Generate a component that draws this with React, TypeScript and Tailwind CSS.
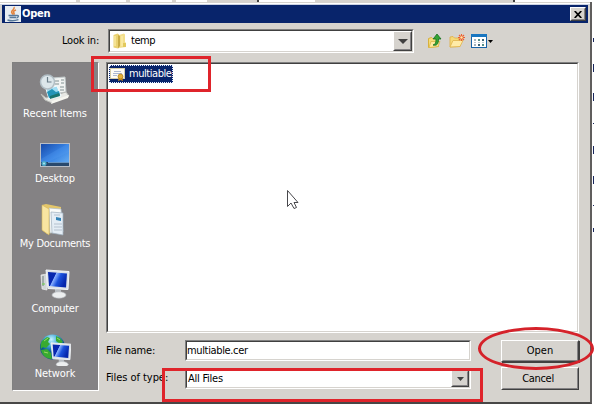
import { useState } from 'react';
import type { ReactNode } from 'react';

const sunken = 'border border-t-[#808080] border-l-[#808080] border-r-white border-b-white';
const sunkenInner = 'border border-t-[#404040] border-l-[#404040] border-r-[#d6d3ce] border-b-[#d6d3ce]';
const raised = 'border border-t-white border-l-white border-r-[#404040] border-b-[#404040]';
const raisedInner = 'border border-t-[#d6d3ce] border-l-[#d6d3ce] border-r-[#848284] border-b-[#848284]';

function JavaIcon() {
  return (
    <svg className="w-4 h-4 shrink-0" viewBox="0 0 16 16" fill="none">
      <rect width="16" height="16" fill="#e8edf2" />
      <path d="M9 1c1.500 2.500-4 3.500-2 6l1 1.500M11 4C8.500 5 8 5.500 9 7c.4.6.3 1.200-.4 1.800" stroke="#e4833c" strokeWidth="1.500" />
      <path d="M3.500 9.500h8M4.500 11.500h6.500M11.500 9.500c3-.5 2 2 0 2.500M2.500 14c3 1 8 .8 11-.3" stroke="#58799a" strokeWidth="1.400" />
    </svg>
  );
}

function FolderIcon() {
  return (
    <svg className="w-4 h-4 shrink-0" viewBox="0 0 16 16">
      <path d="M1.500 2l4-1.500 1.500 1v13l-1 1-4.500-1z" fill="#ead273" />
      <path d="M7 2l5-1.500 1 1V9l1 1v4l-7 1z" fill="#f3df8c" />
      <path d="M6 2l2 1v10l-2 2.500z" fill="#c9ab45" />
      <path d="M3 3v10M10 3v10" stroke="#fff3b5" />
      <path d="M11 10h3v4h-3z" fill="#e2c95d" />
    </svg>
  );
}

function UpFolderIcon() {
  return (
    <svg className="w-4 h-4" viewBox="0 0 16 16">
      <path d="M1.500 14.500V5.500l3-1 1 1h5l1 8z" fill="#f5dc78" stroke="#d8b13d" />
      <path d="M2 14.500l2-6h9l-2 5z" fill="#ffeaa0" stroke="#dcb748" strokeWidth=".8" />
      <path d="M6 12c2.500-.5 3-2.500 3-6H6.200L10 1l4 5h-2.500c0 5-1.500 7-5.500 6z" fill="#35a435" stroke="#14701c" strokeWidth=".8" />
    </svg>
  );
}

function NewFolderIcon() {
  return (
    <svg className="w-4 h-4" viewBox="0 0 16 16">
      <path d="M1 14V4l3-.5L5.500 5H10l1 8.500z" fill="#f5d979" stroke="#dfae43" strokeWidth=".8" />
      <path d="M1 14l3-6.500h10L11 13.500z" fill="#ffeba7" stroke="#e0b44c" strokeWidth=".8" />
      <path d="M12.500 1v7M9 4.500h7M10 2l5 5M15 2l-5 5" stroke="#ed6030" strokeWidth="1.100" />
      <circle cx="12.500" cy="4.500" r="1.200" fill="#ffe9aa" />
    </svg>
  );
}

function ViewIcon() {
  return (
    <svg className="w-[23px] h-4" viewBox="0 0 23 16">
      <rect x=".5" y="1.500" width="15" height="13" fill="#fff" stroke="#1763a8" />
      <path d="M0 1h16v3H0z" fill="#1976c0" />
      <path d="M3 6h2v2H3zM3 11h2v2H3z" fill="#a5b3bd" />
      <path d="M7 6h2v2H7zM11 11h2v2h-2z" fill="#568e86" />
      <path d="M11 6h2v2h-2zM7 11h2v2H7z" fill="#3e6578" />
      <path d="M3 9h2v1H3zM7 9h2v1H7zM11 9h2v1h-2z" fill="#b9c8d1" />
      <path d="M17 7h5l-2.500 3z" fill="#000" />
    </svg>
  );
}

function CertificateIcon() {
  return (
    <svg className="w-4 h-4 shrink-0" viewBox="0 0 16 16">
      <rect x=".5" y="2.500" width="14" height="10" fill="#fffdf4" stroke="#d5cda9" />
      <path d="M4 5.500h7M3 7.500h9M3 9.500h4" stroke="#98a7c9" strokeWidth=".8" />
      <path d="M9 11l-1 4 2.500-1 2.500 1-1-4z" fill="#c98d1c" />
      <circle cx="10.500" cy="10.500" r="2.500" fill="#e5b238" stroke="#a97512" strokeWidth=".7" />
    </svg>
  );
}

function RecentIcon() {
  return (
    <svg className="w-8 h-8" viewBox="0 0 32 32">
      <path d="M13 4l13-1 1 15-14 2z" fill="#f1f3f2" stroke="#c1c9ca" />
      <path d="M16 7h4M22 6h3M16 10h4M22 9h3M21 13h4M21 16h4" stroke="#819292" strokeWidth="1.200" />
      <path d="M2 20l4 6 7 3 17-7-3-4-20 6z" fill="#e7e8e4" stroke="#b9bbb7" />
      <path d="M7 15l11-3 4 10-12 3z" fill="#9fdcf3" stroke="#f2fbfe" />
      <path d="M8 18l5-3 4 3 3-1 1 4-11 3z" fill="#2394b7" />
      <path d="M11 22l9-3 1 3-10 3z" fill="#19736e" />
      <path d="M12 30l17-6 1-3-17 6z" fill="#f6f6f0" />
      <circle cx="8.500" cy="8" r="7" fill="#dce6ea" stroke="#b0bdc4" strokeWidth="1.500" />
      <path d="M8.500 3v5h4" stroke="#6b7d88" strokeWidth="1.200" fill="none" />
    </svg>
  );
}

function DesktopIcon() {
  return (
    <svg className="w-8 h-8" viewBox="0 0 32 32">
      <defs>
        <linearGradient id="desktopFill" x2="1" y2="1">
          <stop stopColor="#1748a6" /><stop offset=".5" stopColor="#3682e4" /><stop offset="1" stopColor="#70b5f4" />
        </linearGradient>
      </defs>
      <rect x="1.500" y="4.500" width="29" height="23" fill="url(#desktopFill)" stroke="#b9bec6" />
      <path d="M2 20L28 5h2v8L9 23H2z" fill="#5ba0f0" opacity=".25" />
      <path d="M2 23h28v4H2z" fill="#29496d" />
      <path d="M9 23.500h21" stroke="#6493c3" />
      <circle cx="5" cy="24.500" r="2.500" fill="#4ca9c7" />
      <circle cx="5" cy="24.500" r="1" fill="#b1e4ed" />
    </svg>
  );
}

function DocumentsIcon() {
  return (
    <svg className="w-8 h-8" viewBox="0 0 32 32">
      <path d="M3 1l4-1 15 3v24L8 30l-5-4z" fill="#e4c669" />
      <path d="M10 4l12 1 2 23-13 1z" fill="#fafbf9" stroke="#adbdc8" strokeWidth=".7" />
      <path d="M12 8l12 1v22l-11-2z" fill="#e4edf5" stroke="#9dafbd" strokeWidth=".7" />
      <path d="M15 11h6M15 20h8M15 23h8M15 26h8" stroke="#b4c1ce" />
      <path d="M17 13l5 1v3l-5-1z" fill="#3383b6" />
      <path d="M3 1l7 4v26l-7-5z" fill="#f8e5a1" stroke="#d4b65b" strokeWidth=".6" />
    </svg>
  );
}

function Monitor({ id }: { id: string }) {
  return (
    <>
      <defs>
        <linearGradient id={id} x2="1" y2=".4">
          <stop stopColor="#0929aa" /><stop offset=".38" stopColor="#0727b0" /><stop offset=".42" stopColor="#8bb1ff" /><stop offset=".65" stopColor="#1b52dd" /><stop offset="1" stopColor="#0526ac" />
        </linearGradient>
      </defs>
      <path d="M16 20l6 1v5h-6z" fill="#b8bdc2" />
      <ellipse cx="20" cy="26" rx="7" ry="3.200" fill="#eceeef" stroke="#b7bbc0" strokeWidth=".6" />
      <path d="M7 1l23 1.500-1 18-20-1z" fill="#dbe1e7" stroke="#f2f5f8" />
      <path d="M9 3l19 1.500-1 14-17-1.500z" fill={`url(#${id})`} />
    </>
  );
}

function ComputerIcon() {
  return (
    <svg className="w-8 h-8" viewBox="0 0 32 32">
      <path d="M2 6l6-1v16l-5-1z" fill="#d1d6d7" stroke="#f1f1f1" strokeWidth=".7" />
      <path d="M4 7v10" stroke="#71807c" />
      <path d="M3 15h3" stroke="#6fd34b" />
      <Monitor id="computerFill" />
    </svg>
  );
}

function NetworkIcon() {
  return (
    <svg className="w-8 h-8" viewBox="0 0 32 32">
      <defs>
        <radialGradient id="globeFill" cx=".45" cy=".2">
          <stop stopColor="#c9f3ff" /><stop offset=".5" stopColor="#4cb1dc" /><stop offset="1" stopColor="#08558f" />
        </radialGradient>
      </defs>
      <circle cx="13.500" cy="13" r="12.500" fill="url(#globeFill)" />
      <path d="M3 7l5-4 3 1-2 4 2 2-4 4-3-1-2 2c-1-3 0-6 1-8zM17 2l4 2 3 4-3 2-4-3zM2 16l6-1 4 4 1 6c-6 0-10-4-11-9z" fill="#38aa31" />
      <path d="M5 7l4-3M18 4l3 2M5 18l4 1" stroke="#9dda65" />
      <g transform="translate(6 8) scale(.86)"><Monitor id="networkFill" /></g>
    </svg>
  );
}

const places: { label: string; icon: ReactNode; spacing: string }[] = [
  { label: 'Recent Items', icon: <RecentIcon />, spacing: 'tracking-[-0.1px]' },
  { label: 'Desktop', icon: <DesktopIcon />, spacing: 'tracking-[-0.15px]' },
  { label: 'My Documents', icon: <DocumentsIcon />, spacing: 'tracking-[-0.3px]' },
  { label: 'Computer', icon: <ComputerIcon />, spacing: 'tracking-[-0.3px]' },
  { label: 'Network', icon: <NetworkIcon />, spacing: 'tracking-[-0.1px]' },
];

function DropButton({ small = false }: { small?: boolean }) {
  return (
    <button type="button" aria-label="Show options" className={`${raised} ${small ? 'w-[18px]' : 'w-[19px]'} h-full bg-[#d6d3ce]`}>
      <span className={`${raisedInner} flex items-center justify-center w-full h-full`}>
        <svg className={small ? 'w-[7px] h-1' : 'w-[10px] h-[5px]'} viewBox="0 0 10 5" preserveAspectRatio="none">
          <path d="M0 0h10L5 5z" fill="#404040" />
        </svg>
      </span>
    </button>
  );
}

export default function App() {
  const [fileName, setFileName] = useState('multiable.cer');

  return (
    <div className="relative w-[594px] h-[405px] overflow-hidden bg-white text-black text-[11px] leading-[14px] font-['DejaVu_Sans_Condensed','Noto_Sans',sans-serif]">
      {/* Edge of the window behind */}
      <div className="flex h-[2px] bg-[#d6d3ce]">
        <div className="w-[76px] bg-white" />
        <div className="w-1" />
        <div className="w-[46px] bg-white" />
        <div className="w-1" />
        <div className="w-[42px] bg-white" />
        <div className="w-1" />
        <div className="w-[31px] bg-white" />
        <div className="w-[50px]" />
        <div className="w-[2px] bg-[#404040]" />
        <div className="w-[56px] bg-white" />
        <div className="w-[198px]" />
        <div className="w-[2px] bg-[#404040]" />
        <div className="flex-1 bg-white" />
      </div>

      {/* Dialog */}
      <div className="w-[592px] h-[402px] bg-[#d6d3ce] border-r-2 border-b-2 border-r-[#605e5d] border-b-[#484746]">
        <div className="h-[3px] border-y border-t-[#d6d3ce] border-b-[#cbd2e2] bg-white" />
        <header className="flex items-center w-[586px] h-[18px] ml-[2px] pl-[3px] pr-[2px] bg-[#08246b]">
          <JavaIcon />
          <h1 className="ml-[1px] flex-1 text-white text-[11px] font-bold tracking-[-0.2px] font-['DejaVu_Sans_Condensed',sans-serif]">Open</h1>
          <button type="button" aria-label="Close" className={`${raised} w-4 h-[14px] bg-[#d6d3ce]`}>
            <span className={`${raisedInner} flex items-center justify-center w-full h-full`}>
              <svg className="w-2 h-[7px]" viewBox="0 0 8 7"><path d="M.7 0l6.600 7M7.300 0L.7 7" stroke="#000" strokeWidth="1.700" /></svg>
            </span>
          </button>
        </header>

        {/* Look in */}
        <div className="flex items-center h-6 mt-[6px] pl-[62px]">
          <label className="w-[46px] tracking-[-0.2px]">Look in:</label>
          <div className={`${sunken} w-[306px] h-6`}>
            <div className={`${sunkenInner} flex items-center w-full h-full bg-white`}>
              <span className="ml-[2px]"><FolderIcon /></span>
              <span className="ml-[3px] flex-1 tracking-[-0.45px]">temp</span>
              <DropButton />
            </div>
          </div>
          <div className="flex items-center ml-[13px] gap-[6px]">
            <UpFolderIcon />
            <NewFolderIcon />
            <ViewIcon />
          </div>
        </div>

        <div className="flex mt-[9px] pl-3">
          {/* Places bar */}
          <nav className={`${sunken} w-[87px] h-[329px] bg-[#848284] text-white`}>
            <ul className="flex flex-col pt-[11px]">
              {places.map((place) => (
                <li key={place.label} className="flex flex-col items-center gap-px h-[65px] pr-px">
                  {place.icon}
                  <span className={`${place.spacing} whitespace-nowrap`}>{place.label}</span>
                </li>
              ))}
            </ul>
          </nav>

          <main className="ml-[7px] w-[473px]">
            <div className={`${sunken} h-[271px]`}>
              <div className={`${sunkenInner} h-full bg-white`}>
                <div className="flex items-center w-[64px] h-[18px] mt-px ml-px border border-dotted border-[#e5edff] bg-[#08246b] text-white">
                  <CertificateIcon />
                  <span className="ml-[3px] tracking-[-0.45px]">multiable</span>
                </div>
              </div>
            </div>

            <div className="flex mt-[7px]">
              <div className="flex flex-col gap-[7px]">
                <div className="flex h-[21px] items-center">
                  <label htmlFor="fileName" className="w-[79px] tracking-[-0.2px]">File name:</label>
                  <div className={`${sunken} w-[286px] h-[21px]`}>
                    <input id="fileName" value={fileName} onChange={(e) => setFileName(e.target.value)} className={`${sunkenInner} block w-full h-full bg-white tracking-[-0.35px] outline-none`} />
                  </div>
                </div>
                <div className="flex h-[21px] items-center">
                  <label className="w-[79px] pb-[2px] tracking-[-0.05px] whitespace-nowrap">Files of type:</label>
                  <div className={`${sunken} w-[286px] h-[21px]`}>
                    <div className={`${sunkenInner} flex items-center w-full h-full pl-px bg-white`}>
                      <span className="flex-1 pt-px tracking-[-0.25px]">All Files</span>
                      <DropButton small />
                    </div>
                  </div>
                </div>
              </div>
              <div className="flex flex-col gap-[5px] ml-[30px]">
                <button type="button" className={`${raised} w-[78px] h-[22px] shadow-[1px_1px_0_0_#404040]`}>
                  <span className={`${raisedInner} flex items-center justify-center w-full h-full`}>Open</span>
                </button>
                <button type="button" className={`${raised} w-[78px] h-[23px]`}>
                  <span className={`${raisedInner} flex items-center justify-center w-full h-full pr-1 tracking-[-0.3px]`}>Cancel</span>
                </button>
              </div>
            </div>
          </main>
        </div>
      </div>

      {/* Text showing past the right edge */}
      <div className="absolute top-[38px] right-0 w-px h-[194px] flex flex-col justify-between">
        <i className="h-1 bg-[#19275e]" />
        <i className="h-2 bg-[#19275e]" />
        <i className="h-2 bg-[#19275e]" />
        <i className="h-px bg-[#19275e]" />
        <i className="h-2 bg-[#19275e]" />
        <i className="h-2 bg-[#19275e]" />
        <i className="h-px bg-[#19275e]" />
        <i className="h-1 bg-[#19275e]" />
      </div>

      {/* Highlights */}
      <div className="absolute left-[91px] top-[56px] w-[120px] h-[36px] border-3 border-[#df242b]" />
      <div className="absolute left-[162px] top-[368px] w-[321px] h-[34px] border-3 border-[#df242b]" />
      <div className="absolute left-[478px] top-[327px] w-[116px] h-[43px] border-3 border-[#d5222a] rounded-[50%]" />

      {/* Pointer */}
      <svg className="absolute left-[286px] top-[189px] w-[14px] h-[21px]" viewBox="0 0 14 21">
        <path d="M1.500 1.500v16l3.500-3.500 3 5.500 2.500-1-2.500-5h4z" fill="#fff" stroke="#48484c" />
      </svg>
    </div>
  );
}
